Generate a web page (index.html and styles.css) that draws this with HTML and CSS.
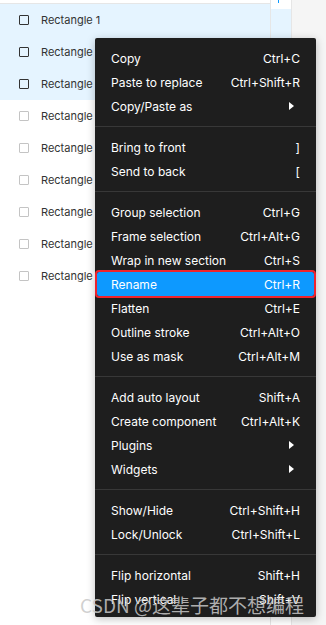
FILE: index.html
```html
<!DOCTYPE html>
<html>
<head>
    <title>Layers context menu</title>
    <link rel="stylesheet" href="styles.css">
</head>
<body>

<div class="panel">
    <div class="layers">
        <div class="layers-top"></div>
        <div class="layer selected"><span class="box"></span>Rectangle 1</div>
        <div class="layer selected"><span class="box"></span>Rectangle 2</div>
        <div class="layer selected"><span class="box"></span>Rectangle 3</div>
        <div class="layer"><span class="box"></span>Rectangle 4</div>
        <div class="layer"><span class="box"></span>Rectangle 5</div>
        <div class="layer"><span class="box"></span>Rectangle 6</div>
        <div class="layer"><span class="box"></span>Rectangle 7</div>
        <div class="layer"><span class="box"></span>Rectangle 8</div>
        <div class="layer"><span class="box"></span>Rectangle 9</div>
    </div>
    <div class="gutter">
        <div class="gutter-top"><span class="tick"></span></div>
        <div class="gutter-sel"></div>
    </div>
</div>

<div class="menu">
    <div class="menu-section">
        <div class="item"><span>Copy</span><span>Ctrl+C</span></div>
        <div class="item"><span>Paste to replace</span><span>Ctrl+Shift+R</span></div>
        <div class="item"><span>Copy/Paste as</span><span class="arrow"></span></div>
    </div>
    <div class="menu-section">
        <div class="item"><span>Bring to front</span><span>]</span></div>
        <div class="item"><span>Send to back</span><span>[</span></div>
    </div>
    <div class="menu-section">
        <div class="item"><span>Group selection</span><span>Ctrl+G</span></div>
        <div class="item"><span>Frame selection</span><span>Ctrl+Alt+G</span></div>
        <div class="item"><span>Wrap in new section</span><span>Ctrl+S</span></div>
        <div class="item active"><span>Rename</span><span>Ctrl+R</span></div>
        <div class="item"><span>Flatten</span><span>Ctrl+E</span></div>
        <div class="item"><span>Outline stroke</span><span>Ctrl+Alt+O</span></div>
        <div class="item"><span>Use as mask</span><span>Ctrl+Alt+M</span></div>
    </div>
    <div class="menu-section">
        <div class="item"><span>Add auto layout</span><span>Shift+A</span></div>
        <div class="item"><span>Create component</span><span>Ctrl+Alt+K</span></div>
        <div class="item"><span>Plugins</span><span class="arrow"></span></div>
        <div class="item"><span>Widgets</span><span class="arrow"></span></div>
    </div>
    <div class="menu-section">
        <div class="item"><span>Show/Hide</span><span>Ctrl+Shift+H</span></div>
        <div class="item"><span>Lock/Unlock</span><span>Ctrl+Shift+L</span></div>
    </div>
    <div class="menu-section">
        <div class="item"><span>Flip horizontal</span><span>Shift+H</span></div>
        <div class="item"><span>Flip vertical</span><span>Shift+V</span></div>
    </div>
</div>

<div class="watermark">CSDN @这辈子都不想编程</div>

</body>
</html>
```

FILE: styles.css
```css
body {
    margin: 0;
    height: 625px;
    overflow: hidden;
    background-color: #f5f5f5;
    font-family: Inter, "Noto Sans", sans-serif;
}
.panel {
    display: flex;
    height: 625px;
}
.layers {
    width: 270px;
    background-color: #fff;
    border-right: 1px solid #e6e6e6;
}
.layers-top {
    height: 3px;
    border-bottom: 1px solid #e6e6e6;
}
.layer {
    display: flex;
    align-items: center;
    height: 32px;
    padding-left: 19px;
    font-size: 11px;
    color: #333;
}
.layer.selected {
    background-color: #e5f4ff;
}
.box {
    width: 8px;
    height: 8px;
    border: 1px solid #c4c4c4;
    border-radius: 1px;
    margin-right: 12px;
}
.layer.selected .box {
    border-color: #333;
}
.gutter {
    width: 20px;
    background-color: #fff;
    border-right: 1px solid #e6e6e6;
}
.gutter-top {
    height: 9px;
    position: relative;
}
.tick {
    position: absolute;
    left: 7px;
    top: 0;
    width: 1px;
    height: 3px;
    background-color: #0d99ff;
}
.gutter-sel {
    height: 91px;
    background-color: #e5f4ff;
}

/* context menu */
.menu {
    position: absolute;
    left: 95px;
    top: 38px;
    width: 221px;
    background-color: #1e1e1e;
    border-radius: 2px;
    box-shadow: 0 2px 8px rgba(0, 0, 0, 0.25);
    font-size: 12px;
    color: #fff;
}
.menu-section {
    padding: 8px 0;
    border-top: 1px solid #383838;
}
.menu-section:first-child {
    border-top: none;
}
.menu-section:last-child {
    padding-bottom: 6px;
}
.item {
    display: flex;
    justify-content: space-between;
    align-items: center;
    height: 24px;
    padding: 0 16px;
}
.item.active {
    background-color: #0d99ff;
    margin: 0 2px;
    padding: 0 14px;
    outline: 2px solid #f0232d;
    outline-offset: 0;
    border-radius: 2px;
}
.arrow {
    width: 0;
    height: 0;
    border-top: 4px solid transparent;
    border-bottom: 4px solid transparent;
    border-left: 5px solid #fff;
    margin-right: 6px;
}

.watermark {
    position: absolute;
    left: 80px;
    top: 591px;
    font-size: 19px;
    color: rgba(200, 200, 200, 0.85);
    font-family: "Noto Sans CJK SC", sans-serif;
}
```
